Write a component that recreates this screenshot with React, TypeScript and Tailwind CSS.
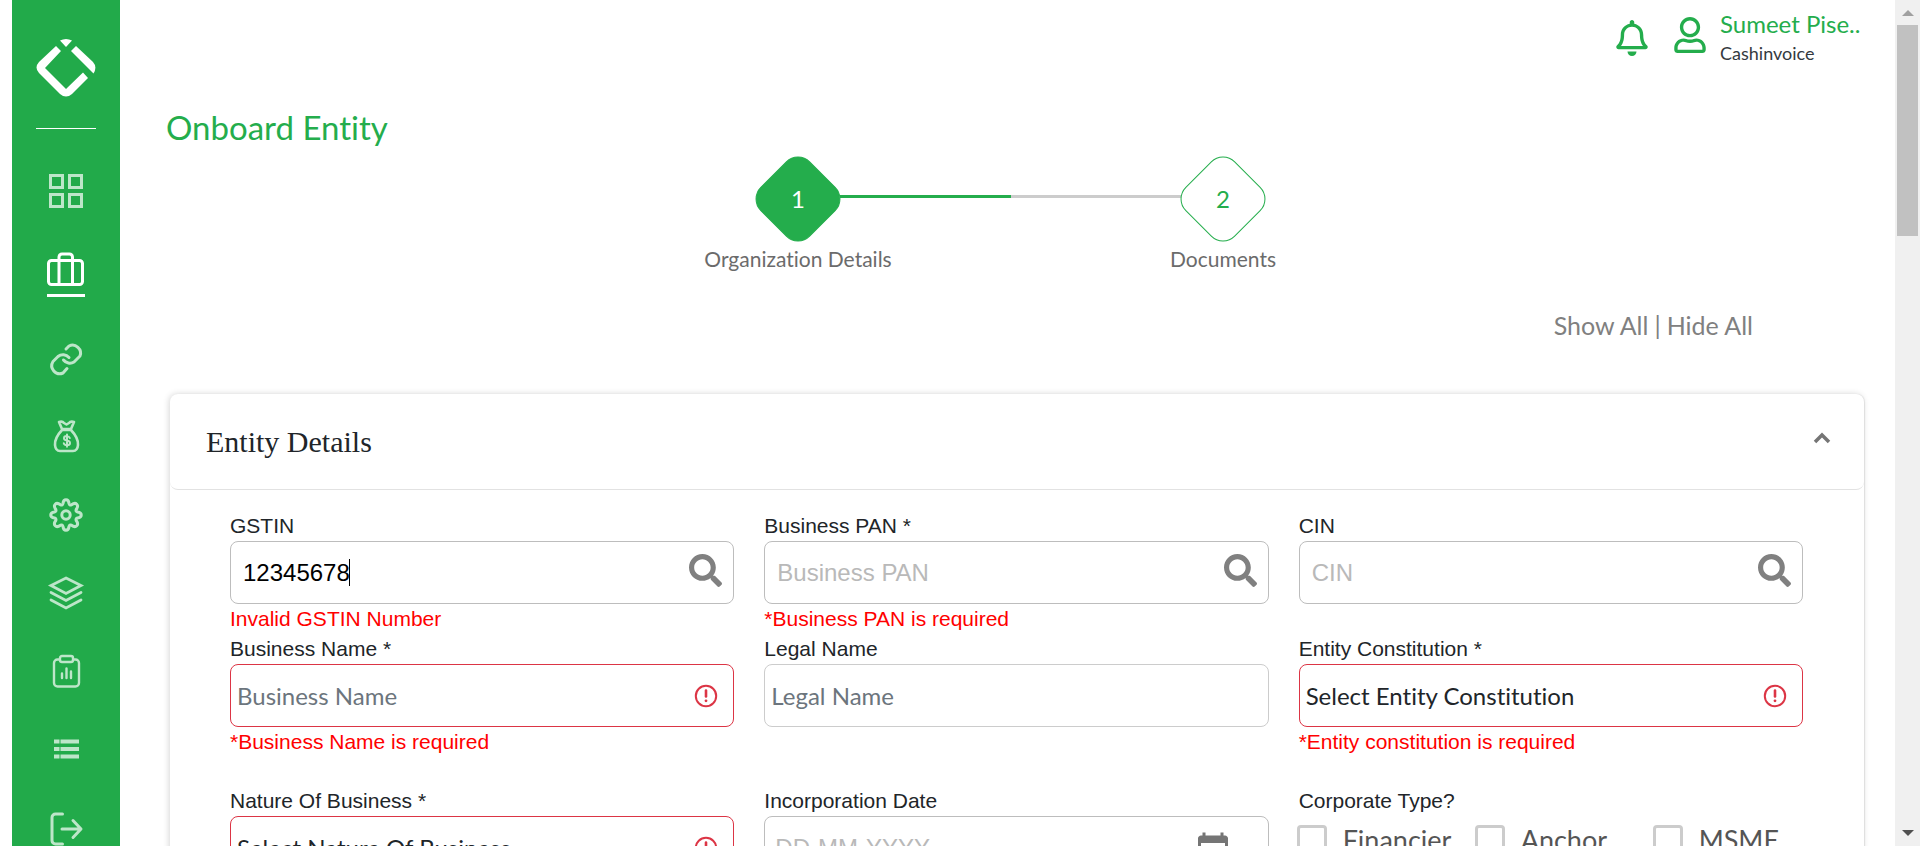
import React from "react";
import { FaRegBell, FaRegUser, FaSearch } from "react-icons/fa";
import { MdCalendarToday } from "react-icons/md";

const sans = "font-['Lato',sans-serif]";

function Logo() {
  return (
    <svg viewBox="0 0 60 58" className="h-[58px] w-[60px]" fill="#fff" role="img" aria-label="Cashinvoice">
      <path d="M24 1.5 Q30 -1.5 36 1.5 L30 8 Z" />
      <path d="M20 7 L25 12 L9 29 L30 50 L47 33.5 L52 39 L36 55 Q30 60 24 55 L3 34 Q-2 28.500 3 23 Z" />
      <path d="M40 7 L57 23 Q61.500 28 57.500 34.500 L35 12 Z" />
    </svg>
  );
}

function NavIcon({ name }: { name: string }) {
  const p = {
    fill: "none",
    stroke: "currentColor",
    strokeWidth: 3,
    strokeLinecap: "round" as const,
    strokeLinejoin: "round" as const,
    viewBox: "0 0 38 38",
    className: "size-[38px] overflow-visible",
    "aria-hidden": true,
  };
  switch (name) {
    case "Dashboard":
      return (
        <svg {...p} strokeLinejoin="miter">
          <rect x="3.500" y="3.500" width="12" height="12" />
          <rect x="22.500" y="3.500" width="12" height="12" />
          <rect x="3.500" y="22.500" width="12" height="12" />
          <rect x="22.500" y="22.500" width="12" height="12" />
        </svg>
      );
    case "Entities":
      return (
        <svg {...p}>
          <rect x="1.500" y="9.500" width="34" height="24" rx="3" />
          <path d="M12 33V6a3 3 0 0 1 3-3h7.500a3 3 0 0 1 3 3v27" />
        </svg>
      );
    case "Links":
      return (
        <svg {...p}>
          <path d="M19 9 L22 6 A8 8 0 0 1 33 16 L27 22 A8 8 0 0 1 16.500 20" />
          <path d="M22 17.500 A8 8 0 0 0 11 16.500 L6 21.500 A8 8 0 0 0 16 33 L20 28.500" />
        </svg>
      );
    case "Funds":
      return (
        <svg {...p} strokeWidth={2.6}>
          <path d="M15 11 L12 4 Q15.500 3 17 5 L19.500 6.500 L22 5 Q23.500 3 27 4 L24 11 Z" />
          <path d="M15 12 H24 Q31.500 20 31 27 Q30.500 33 26 33 H13 Q8.500 33 8 27 Q7.500 20 15 12 Z" />
          <path
            strokeWidth="2"
            d="M22.800 20 Q22 18 19.700 18 Q17 18 17 20.200 Q17 22 20 22.500 Q23 23 23 25 Q23 27.200 20 27.200 Q17.400 27.200 16.800 25.200 M20 16.500 V28.800"
          />
        </svg>
      );
    case "Settings":
      return (
        <svg {...p}>
          <circle cx="19" cy="19" r="4.200" />
          <path d="M16 7.500 C16.500 2.500 21.500 2.500 22 7.500 Q22.500 9.500 24.500 8.800 C29 5.500 32.500 9 29.200 13.500 Q28.500 15.500 30.500 16 C35.500 16.500 35.500 21.500 30.500 22 Q28.500 22.500 29.200 24.500 C32.500 29 29 32.500 24.500 29.200 Q22.500 28.500 22 30.500 C21.500 35.500 16.500 35.500 16 30.500 Q15.500 28.500 13.500 29.200 C9 32.500 5.500 29 8.800 24.500 Q9.500 22.500 7.500 22 C2.500 21.500 2.500 16.500 7.500 16 Q9.500 15.500 8.800 13.500 C5.500 9 9 5.500 13.500 8.800 Q15.500 9.500 16 7.500 Z" />
        </svg>
      );
    case "Products":
      return (
        <svg {...p} strokeWidth={2.8} strokeLinejoin="miter">
          <path d="M19 4 L34 11.500 L19 19.500 L4 11.500 Z M4 18.500 L19 26.500 L34 18.500 M4 26 L19 34 L34 26" />
        </svg>
      );
    case "Reports":
      return (
        <svg {...p} strokeWidth={2.4}>
          <rect x="7" y="7.500" width="25" height="27" rx="3.500" />
          <rect x="13" y="4" width="13" height="6" rx="2" fill="#22aa4a" />
          <path d="M15 21.500V26 M19.500 16.500V26 M24 19.500V26" />
        </svg>
      );
    case "Lists":
      return (
        <svg {...p} strokeLinecap="butt" strokeWidth={4}>
          <path d="M7 11.500H12.500 M13.500 11.500H32 M7 19H12.500 M13.500 19H32 M7 26.500H12.500 M13.500 26.500H32" />
        </svg>
      );
    default:
      return (
        <svg {...p}>
          <path d="M15.500 6H8.500a3.500 3.500 0 0 0-3.500 3.500v23a3.500 3.500 0 0 0 3.500 3.500H15.500 M15 21H33 M26 12.500L34 21L26 29.500" />
        </svg>
      );
  }
}

const nav = ["Links", "Funds", "Settings", "Products", "Reports", "Lists", "Log out"];

function Sidebar() {
  return (
    <nav aria-label="Main" className="ml-3 flex w-[108px] shrink-0 flex-col items-center bg-[#22aa4a] pt-[39px] text-[#bde6c9]">
      <a href="#home"><Logo /></a>
      <div className="mt-[31px] h-px w-[60px] shrink-0 bg-white" />
      <a href="#dashboard" aria-label="Dashboard" className="mt-[43px]"><NavIcon name="Dashboard" /></a>
      <a href="#entities" aria-label="Entities" className="mt-[41px] border-b-3 border-white pb-[5px] text-white">
        <NavIcon name="Entities" />
      </a>
      <div className="mt-[43px] flex flex-col gap-10">
        {nav.map((n) => (
          <a key={n} href="#menu" aria-label={n}><NavIcon name={n} /></a>
        ))}
      </div>
    </nav>
  );
}

function Step({ n, label, active }: { n: number; label: string; active?: boolean }) {
  return (
    <li className="z-10 flex w-[84px] flex-col items-center">
      <div className="flex size-[84px] items-center justify-center">
        <div
          className={
            "flex size-[70px] shrink-0 rotate-45 items-center justify-center rounded-[17px] border border-[#24ad4c] text-2xl " +
            (active ? "bg-[#24ad4c] text-white" : "bg-white text-[#24ad4c]")
          }
        >
          <span className="-rotate-45">{n}</span>
        </div>
      </div>
      <span className="mt-1 text-[21px] leading-7 whitespace-nowrap text-[#6b6b6b]">{label}</span>
    </li>
  );
}

function Warning() {
  return (
    <svg viewBox="0 0 24 24" className="pointer-events-none absolute top-5 right-4 size-6" fill="none" stroke="#dc3545" strokeWidth="2" strokeLinecap="round" aria-hidden="true">
      <circle cx="12" cy="12" r="10.200" />
      <path d="M12 6.500V12.500" strokeWidth="2.600" />
      <circle cx="12" cy="16.800" r="1.400" fill="#dc3545" stroke="none" />
    </svg>
  );
}

type FieldProps = {
  id: string;
  label: string;
  error?: string;
  children: React.ReactNode;
};

function Field({ id, label, error, children }: FieldProps) {
  return (
    <div className="font-['Liberation_Sans',Arial,sans-serif] text-[21px] leading-[30px]">
      <label htmlFor={id} className="block text-[#212529]">{label}</label>
      <div className="relative h-[63px]">{children}</div>
      <p className="h-[30px] text-[#ff0000]">{error}</p>
    </div>
  );
}

const box = "block h-full w-full rounded-lg border bg-white text-2xl outline-none ";

function SearchField({ id, label, error, placeholder, value }: { id: string; label: string; error?: string; placeholder?: string; value?: string }) {
  return (
    <Field id={id} label={label} error={error}>
      <input id={id} type="text" defaultValue={value} placeholder={placeholder} className={box + "border-[#bdbdbd] pr-16 pl-3 text-black placeholder:text-[#b9b9b9]"} />
      {value && (
        <span aria-hidden="true" className="pointer-events-none absolute inset-y-0 left-3 flex items-center text-2xl">
          <span className="invisible">{value}</span>
          <span className="h-[27px] w-px bg-black" />
        </span>
      )}
      <button type="button" aria-label={"Search " + label} className="absolute top-[13px] right-3 text-[#808080]">
        <FaSearch className="size-[33px]" />
      </button>
    </Field>
  );
}

function SelectField({ id, label, error, text }: { id: string; label: string; error?: string; text: string }) {
  return (
    <Field id={id} label={label} error={error}>
      <select id={id} className={box + sans + " appearance-none border-[#dc3545] pr-12 pl-1.5 text-[#212529]"}>
        <option>{text}</option>
      </select>
      <Warning />
    </Field>
  );
}

export default function App() {
  return (
    <div className={"flex h-screen overflow-hidden bg-white [font-variant-ligatures:none] " + sans}>
      <Sidebar />
      <main className="flex min-w-0 flex-1 flex-col pr-[31px] pl-[46px]">
        <header className="flex h-[86px] shrink-0 items-start justify-end">
          <button type="button" aria-label="Notifications" className="mt-5 text-[#24ad4c]">
            <FaRegBell className="size-9" />
          </button>
          <FaRegUser aria-hidden="true" className="mt-[17px] ml-[22px] size-9 text-[#24ad4c]" />
          <div className="ml-3 flex w-36 flex-col">
            <a href="#profile" className="mt-2 text-2xl leading-[31px] text-[#24ad4c]">Sumeet Pise..</a>
            <span className="text-lg leading-7 text-[#343a40]">Cashinvoice</span>
          </div>
        </header>

        <h1 className="h-[71px] shrink-0 text-[33px] leading-[82px] text-[#24ad4c]">Onboard Entity</h1>

        <ol className="mr-[9px] flex shrink-0 justify-center">
          <Step n={1} label="Organization Details" active />
          <li aria-hidden="true" className="mt-[38px] flex h-[3px] w-[341px]">
            <span className="flex-1 bg-[#24ad4c]" />
            <span className="flex-1 bg-[#cccccc]" />
          </li>
          <Step n={2} label="Documents" />
        </ol>

        <div className="mt-9 mr-[111px] flex shrink-0 justify-end gap-1.5 text-[25px] leading-8 text-[#808080]">
          <button type="button">Show All</button>
          <span>|</span>
          <button type="button">Hide All</button>
        </div>

        <section className="mt-[53px] ml-1 h-[900px] shrink-0 rounded-lg bg-white shadow-[-1px_0_6px_rgba(0,0,0,0.16),1px_0_1px_rgba(0,0,0,0.08)]">
          <div className="flex h-24 items-center justify-between rounded-lg border-b border-[#e2e2e2] pr-[26px] pl-9">
            <h2 className="font-['Liberation_Serif','Times_New_Roman',serif] text-3xl text-[#212529]">Entity Details</h2>
            <button type="button" aria-label="Collapse Entity Details" className="mb-2 p-1 text-[#757575]">
              <svg viewBox="0 0 24 24" className="size-6" fill="none" stroke="currentColor" strokeWidth="3.500" aria-hidden="true">
                <path d="M5 16 L12 9 L19 16" />
              </svg>
            </button>
          </div>

          <form className="grid grid-cols-3 gap-x-[30px] pt-[21px] pr-[61px] pl-[60px]">
            <SearchField id="gstin" label="GSTIN" value="12345678" error="Invalid GSTIN Number" />
            <SearchField id="pan" label="Business PAN *" placeholder="Business PAN" error="*Business PAN is required" />
            <SearchField id="cin" label="CIN" placeholder="CIN" />
            <Field id="name" label="Business Name *" error="*Business Name is required">
              <input id="name" type="text" placeholder="Business Name" className={box + sans + " border-[#dc3545] px-1.5 placeholder:text-[#6c757d]"} />
              <Warning />
            </Field>
            <Field id="legal" label="Legal Name">
              <input id="legal" type="text" placeholder="Legal Name" className={box + sans + " border-[#cccccc] px-1.5 placeholder:text-[#6c757d]"} />
            </Field>
            <SelectField id="constitution" label="Entity Constitution *" text="Select Entity Constitution" error="*Entity constitution is required" />
            <div className="mt-[29px]">
              <SelectField id="nature" label="Nature Of Business *" text="Select Nature Of Business" />
            </div>
            <div className="mt-[29px]">
              <Field id="date" label="Incorporation Date">
                <input id="date" type="text" placeholder="DD-MM-YYYY" className={box + "border-[#bdbdbd] px-2.5 placeholder:text-[#b9b9b9]"} />
                <MdCalendarToday aria-hidden="true" className="pointer-events-none absolute top-[15px] right-[38px] size-9 text-[#757575]" />
              </Field>
            </div>
            <fieldset className="mt-[29px]">
              <legend className="font-['Liberation_Sans',Arial,sans-serif] text-[21px] leading-[30px] text-[#212529]">Corporate Type?</legend>
              <div className="mt-[9px] -ml-0.5 grid grid-cols-[178px_178px_auto]">
                {["Financier", "Anchor", "MSME"].map((t) => (
                  <label key={t} className="flex items-center gap-4 text-[27px] leading-[30px] text-[#555555]">
                    <input type="checkbox" className="size-[30px] appearance-none rounded-sm border-3 border-[#cccccc] bg-white" />
                    {t}
                  </label>
                ))}
              </div>
            </fieldset>
          </form>
        </section>
      </main>

      <div aria-hidden="true" className="flex w-[25px] shrink-0 flex-col items-center bg-[#f0f0f0]">
        <svg viewBox="0 0 12 6" className="mt-2.5 h-1.5 w-3" fill="#a0a0a0"><path d="M0 6L6 0L12 6Z" /></svg>
        <div className="mt-[9px] h-[211px] w-[21px] bg-[#c1c1c1]" />
        <svg viewBox="0 0 12 6" className="mt-auto mb-2.5 h-1.5 w-3" fill="#505050"><path d="M0 0L6 6L12 0Z" /></svg>
      </div>
    </div>
  );
}
